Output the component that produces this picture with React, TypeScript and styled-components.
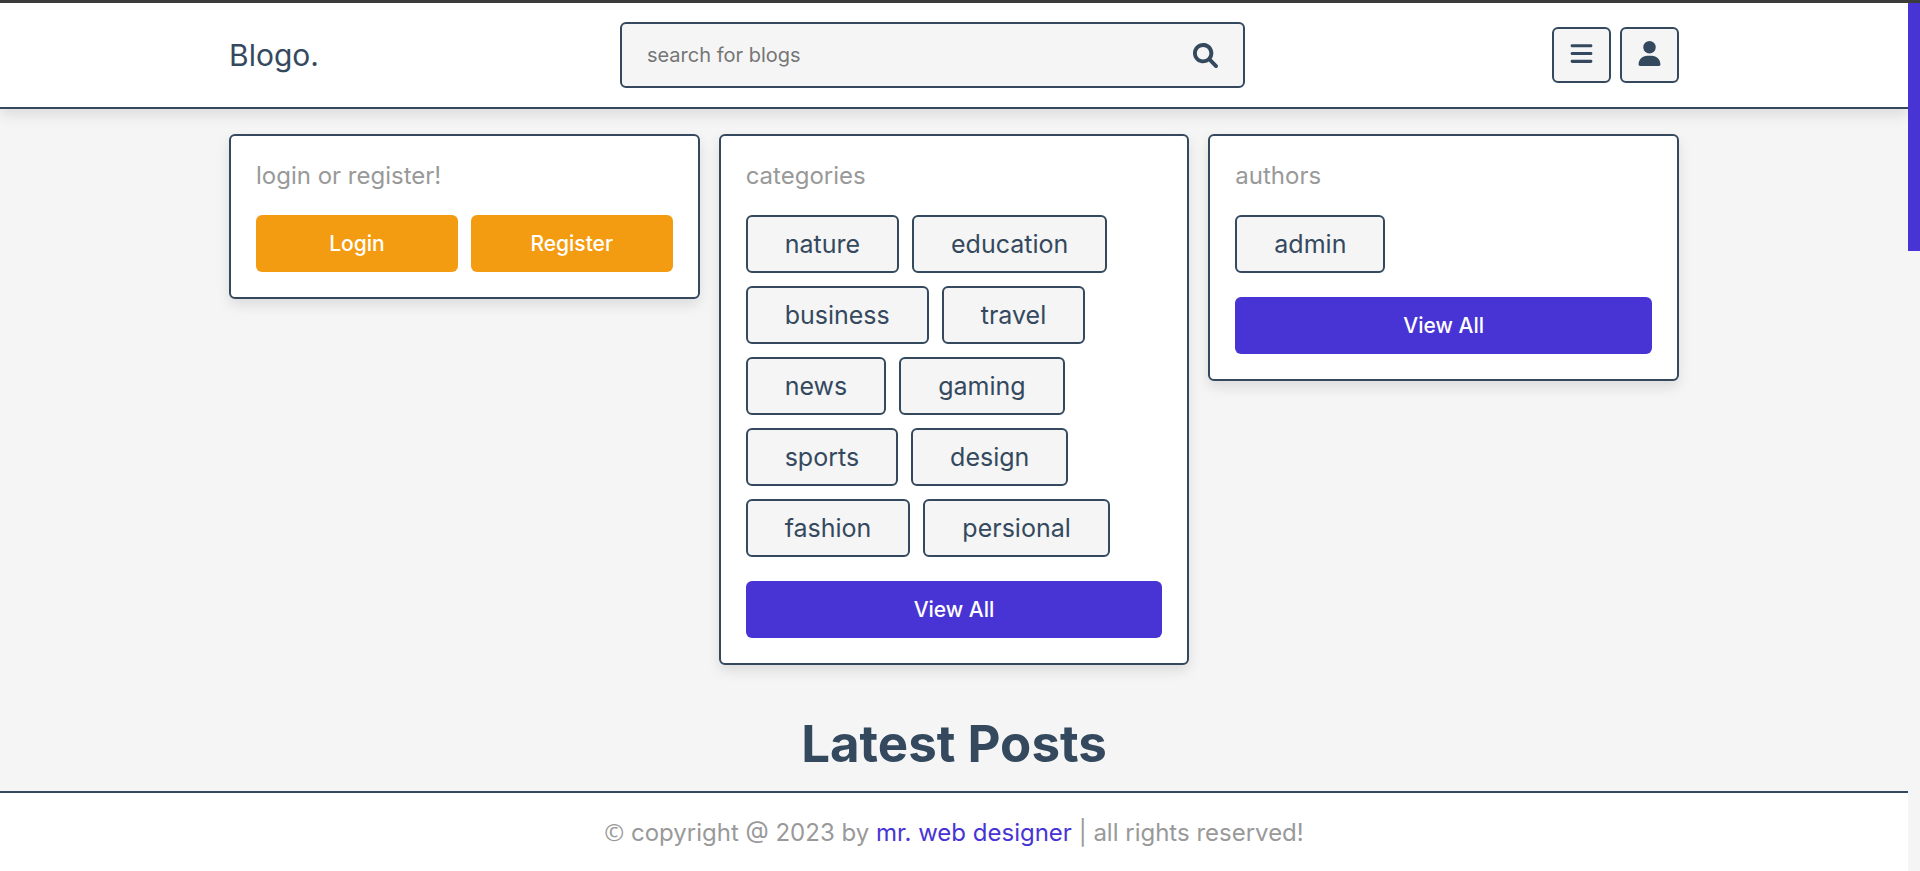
import React from 'react';
import styled, { createGlobalStyle, ThemeProvider } from 'styled-components';
import { FaBars, FaUser } from 'react-icons/fa6';

const theme = {
  main: '#4834d4',
  orange: '#f39c12',
  black: '#34495e',
  white: '#fff',
  lightBg: '#f5f5f5',
  lightColor: '#999',
  strip: '#3b3b3b',
  border: '2px solid #34495e',
  shadow: '0 6px 13px rgba(0, 0, 0, 0.1)',
};

const GlobalStyle = createGlobalStyle`
  * { box-sizing: border-box; margin: 0; padding: 0; }
  body { background: ${theme.lightBg}; }
  body, input, button { font-family: Inter, Roboto, sans-serif; }
  a { text-decoration: none; }
`;

const Shell = styled.div`
  display: grid;
  grid-template-columns: minmax(0, 1fr) 12px;
  min-height: 100vh;
  border-top: 3px solid ${p => p.theme.strip};
`;

const Page = styled.div`
  display: flex;
  flex-direction: column;
  overflow: hidden;
`;

const Rail = styled.div`
  display: flex;
  flex-direction: column;
  background: ${p => p.theme.lightBg};
`;

const RailPart = styled.div<{ $share: number; $filled?: boolean }>`
  flex: ${p => p.$share};
  background: ${p => (p.$filled ? p.theme.main : 'transparent')};
`;

const Header = styled.header`
  background: ${p => p.theme.white};
  border-bottom: ${p => p.theme.border};
  box-shadow: ${p => p.theme.shadow};
`;

const HeaderInner = styled.div`
  display: flex;
  align-items: center;
  justify-content: space-between;
  width: 100%;
  max-width: 1450px;
  margin: 0 auto;
  padding: 19px 0;
`;

const Logo = styled.a`
  color: ${p => p.theme.black};
  font-size: 30px;
  line-height: 36px;
`;

const SearchForm = styled.form`
  display: flex;
  align-items: center;
  gap: 19px;
  flex: 0 1 625px;
  height: 66px;
  padding: 0 25px;
  background: ${p => p.theme.lightBg};
  border: ${p => p.theme.border};
  border-radius: 6px;
`;

const SearchInput = styled.input`
  flex: 1;
  min-width: 0;
  height: 24px;
  border: none;
  outline: none;
  background: none;
  color: ${p => p.theme.black};
  font-size: 20px;
  &::placeholder { color: #757575; }
`;

const SearchButton = styled.button`
  display: flex;
  border: none;
  background: none;
  color: ${p => p.theme.black};
  font-size: 25px;
  cursor: pointer;
`;

const Icons = styled.div`
  display: flex;
  gap: 9px;
  margin-left: 6px;
`;

const IconButton = styled.button`
  display: flex;
  justify-content: center;
  width: 59px;
  height: 56px;
  padding-top: 12px;
  background: ${p => p.theme.lightBg};
  border: ${p => p.theme.border};
  border-radius: 6px;
  color: ${p => p.theme.black};
  font-size: 25px;
  cursor: pointer;
`;

const CardGrid = styled.section`
  display: grid;
  grid-template-columns: repeat(3, minmax(0, 1fr));
  align-items: start;
  gap: 19px;
  width: 100%;
  max-width: 1450px;
  margin: 0 auto;
  padding-top: 25px;
`;

const Card = styled.div`
  padding: 25px;
  background: ${p => p.theme.white};
  border: ${p => p.theme.border};
  border-radius: 6px;
  box-shadow: ${p => p.theme.shadow};
`;

const CardTitle = styled.p`
  margin-bottom: 24px;
  color: ${p => p.theme.lightColor};
  font-size: 24px;
  line-height: 30px;
`;

const Button = styled.a<{ $tone: 'main' | 'orange' }>`
  display: block;
  flex: 1;
  padding: 15px;
  background: ${p => p.theme[p.$tone]};
  border-radius: 6px;
  color: ${p => p.theme.white};
  font-size: 21px;
  font-weight: 500;
  line-height: 27px;
  text-align: center;
`;

const ButtonRow = styled.div`
  display: flex;
  gap: 13px;
`;

const Tags = styled.div`
  display: flex;
  flex-wrap: wrap;
  gap: 13px;
  margin-bottom: 24px;
`;

const Tag = styled.a`
  padding: 12px 37px;
  background: ${p => p.theme.lightBg};
  border: ${p => p.theme.border};
  border-radius: 6px;
  color: ${p => p.theme.black};
  font-size: 25px;
  line-height: 30px;
`;

const Heading = styled.h1`
  padding: 49px 0 17px;
  color: ${p => p.theme.black};
  font-size: 51px;
  font-weight: 700;
  line-height: 60px;
  text-align: center;
`;

const Footer = styled.footer`
  flex: 1;
  padding: 24px 19px;
  background: ${p => p.theme.white};
  border-top: ${p => p.theme.border};
  color: ${p => p.theme.lightColor};
  font-size: 24px;
  line-height: 30px;
  text-align: center;
`;

const Credit = styled.span`
  color: ${p => p.theme.main};
`;

const CopyrightSign = styled.span`
  font-family: 'Open Sans', sans-serif;
`;

const categories = [
  'nature', 'education', 'business', 'travel', 'news',
  'gaming', 'sports', 'design', 'fashion', 'persional',
];
const authors = ['admin'];

function SearchIcon() {
  return (
    <svg viewBox="0 0 512 512" width="25" height="25" fill="currentColor" aria-hidden="true">
      <path d="M500.3 443.7l-119.7-119.7c27.22-40.41 40.65-90.9 33.46-144.7C401.8 87.79 326.8 13.32 235.2 1.723C99.01-15.51-15.51 99.01 1.724 235.2c11.6 91.64 86.08 166.7 177.6 178.9c53.8 7.189 104.3-6.236 144.7-33.46l119.7 119.7c15.62 15.62 40.95 15.62 56.57 0C515.9 484.7 515.9 459.3 500.3 443.7zM79.1 208c0-70.58 57.42-128 128-128s128 57.42 128 128c0 70.58-57.42 128-128 128S79.1 278.6 79.1 208z" />
    </svg>
  );
}

function TagCard({ title, items }: { title: string; items: string[] }) {
  return (
    <Card>
      <CardTitle>{title}</CardTitle>
      <Tags>
        {items.map(item => (
          <Tag key={item} href={`#${item}`}>{item}</Tag>
        ))}
      </Tags>
      <Button $tone="main" href={`#all-${title}`}>View All</Button>
    </Card>
  );
}

export default function App() {
  return (
    <ThemeProvider theme={theme}>
      <GlobalStyle />
      <Shell>
        <Page>
          <Header>
            <HeaderInner>
              <Logo href="#home">Blogo.</Logo>
              <SearchForm role="search" onSubmit={e => e.preventDefault()}>
                <SearchInput type="text" aria-label="search for blogs" placeholder="search for blogs" />
                <SearchButton type="submit" aria-label="search"><SearchIcon /></SearchButton>
              </SearchForm>
              <Icons>
                <IconButton type="button" aria-label="menu"><FaBars /></IconButton>
                <IconButton type="button" aria-label="profile"><FaUser /></IconButton>
              </Icons>
            </HeaderInner>
          </Header>
          <main>
            <CardGrid>
              <Card>
                <CardTitle>login or register!</CardTitle>
                <ButtonRow>
                  <Button $tone="orange" href="#login">Login</Button>
                  <Button $tone="orange" href="#register">Register</Button>
                </ButtonRow>
              </Card>
              <TagCard title="categories" items={categories} />
              <TagCard title="authors" items={authors} />
            </CardGrid>
            <Heading>Latest Posts</Heading>
          </main>
          <Footer>
            <CopyrightSign>©</CopyrightSign> copyright @ 2023 by <Credit>mr. web designer</Credit> | all rights reserved!
          </Footer>
        </Page>
        <Rail aria-hidden="true">
          <RailPart $share={2} $filled />
          <RailPart $share={5} />
        </Rail>
      </Shell>
    </ThemeProvider>
  );
}
